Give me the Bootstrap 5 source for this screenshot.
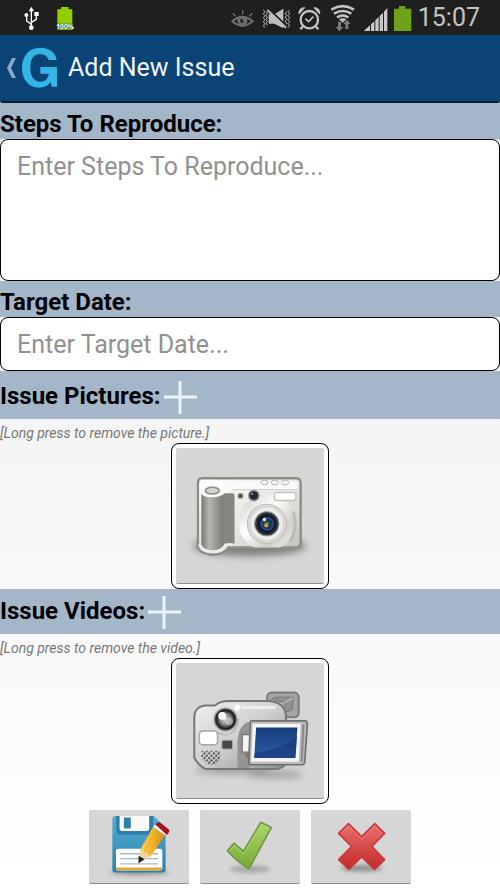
<!DOCTYPE html>
<html lang="en">
<head>
<meta charset="utf-8">
<meta name="viewport" content="width=device-width, initial-scale=1">
<title>Add New Issue</title>
<link href="https://cdn.jsdelivr.net/npm/bootstrap@5.3.0/dist/css/bootstrap.min.css" rel="stylesheet">
<style>
body{font-family:Roboto,sans-serif;background:linear-gradient(#ebebeb,#fff) #fff;min-height:100vh;color:#000}
svg{display:block;flex:none}
.status-bar{height:35px;background:#1f1f1f;color:#c4c4c4;padding:0 20px 0 22px}
.system-left{gap:12px}
.clock{font-size:25px;line-height:34px;margin-left:6px}
.app-bar{height:66px;background:#0a4477}
.app-title{font-size:25px;line-height:34px;color:#f2f2f2;font-weight:400;margin-left:9px}
.back-link{padding-left:5px;gap:5px}
.edge{height:2px;background:#101c33;border-radius:0 0 4px 4px}
.band{background:#a3b7c9}
.band-label{font-size:24px;line-height:36px;font-weight:700}
label.band-label{padding-top:3px;height:36px}
.band-tall{height:48px;padding-top:2px}
.band-video{height:45px;padding-bottom:2px}
.field{border:1px solid #000;border-radius:8px;font-size:25px;line-height:34px;padding:10px 16px;background:#fff;resize:none;color:#000}
.field::placeholder{color:#919191;opacity:1}
.steps{height:142px}
.date{height:54px}
.hint{font-size:14px;line-height:24px;height:24px;font-style:italic;color:#777;padding-top:2px}
.media{width:158px;height:146px;background:#fff;border:1px solid #000;border-radius:8px;padding:4px}
.face{background:#d6d6d6;border:0;border-bottom:1px solid #8e8e8e;border-radius:2px}
.action{width:100px;height:74px}
.actions{gap:11px;padding-top:6px}
.plus{border:0;background:none;margin-left:2px}
</style>
<script src="https://cdn.jsdelivr.net/npm/bootstrap@5.3.0/dist/js/bootstrap.bundle.min.js"></script>
</head>
<body>
<div class="status-bar d-flex align-items-center justify-content-between">
 <div class="system-left d-flex">
  <svg width="19" height="34" viewBox="66 0 57 102" fill="none" stroke="#fff" stroke-width="4"><path d="M94 27V80M94 70L80 60V43M94 64L109 55V42"/><g fill="#fff" stroke="none"><path d="M94 17L102 31H86Z"/><circle cx="94" cy="80" r="7"/><circle cx="79" cy="42" r="6"/><path d="M103 33h13v12h-13z"/></g></svg>
  <svg width="24" height="34" viewBox="158 0 72 102"><path d="M182 18h23v7h11v62h-45V25h11z" fill="#8fce00"/><text x="194" y="83" text-anchor="middle" font-family="Open Sans,sans-serif" font-weight="700" font-size="20" fill="#fff" stroke="#3a4f10" stroke-width="3" paint-order="stroke">100%</text></svg>
 </div>
 <div class="d-flex align-items-center">
  <svg width="30" height="34" viewBox="32 0 90 102" fill="none" stroke="#6f6f6f" stroke-width="4"><path d="M36 61Q66 34 97 61Q66 88 36 61Z" stroke-width="6"/><circle cx="66" cy="59" r="13" fill="#6f6f6f"/><circle cx="65" cy="59" r="6" fill="#1f1f1f" stroke="none"/><path d="M66 59l6-7M67 28v12M37 37l9 9M96 37l-9 9"/></svg>
  <svg width="36" height="34" viewBox="122 0 108 102" fill="none" stroke="#bebebe" stroke-width="3"><path d="M129 27l5 5-5 6 5 6-5 6 5 6-5 6 5 6-5 6 5 6M137 32l4 5-4 6 4 6-4 6 4 6-4 6 4 6M208 27l-5 5 5 6-5 6 5 6-5 6 5 6-5 6 5 6-5 6M199 32l-4 5 4 6-4 6 4 6-4 6 4 6-4 6"/><path d="M145 40h17L189 23V82L162 68H145Z" fill="#bebebe" stroke="none"/><path d="M145 24L201 77" stroke="#1f1f1f" stroke-width="6"/><path d="M141 27L197 80" stroke-width="6"/></svg>
  <svg width="33" height="34" viewBox="230 0 99 102" fill="none" stroke="#c4c4c4" stroke-width="7"><circle cx="267" cy="56" r="26"/><path d="M255 53l10 9 14-15" stroke-width="5"/><path d="M248 76l-8 9M286 76l8 9" stroke-width="7"/><path d="M236 39Q234 20 253 20ZM281 20Q300 20 298 39Z" fill="#c4c4c4" stroke="#c4c4c4" stroke-width="3"/></svg>
  <svg width="34" height="34" viewBox="329 0 102 102" fill="none" stroke="#c4c4c4" stroke-width="8"><path d="M333 26Q367 5 401 26M341 38Q367 22 393 38M350 49Q367 38 384 49"/><path d="M356 55Q367 48 378 55L367 65Z" fill="#c4c4c4" stroke="none"/><path d="M353 62h9v16h7L357 91 346 78h7zM375 84h9V69h7L380 56 369 69h6z" fill="#7b7b7b" stroke="none"/></svg>
  <svg width="28" height="34" viewBox="431 0 84 102" fill="#c9c9c9"><path d="M431 90V89L449 73V90ZM452 90V70L462 61V90ZM465 90V58L475 48V90ZM478 90V45L488 35V90ZM491 90V32L501 21V90Z"/></svg>
  <svg width="20" height="34" viewBox="515 0 60 102"><path d="M536 15h19v8h18v67h-52V23h15z" fill="#70a11a"/></svg>
  <time class="clock">15:07</time>
 </div>
</div>
<header class="app-bar d-flex align-items-center">
 <a href="#" class="back-link d-flex align-items-center text-decoration-none" aria-label="Back">
  <svg width="12" height="24" viewBox="0 0 12 24"><path d="M7 2h4L6 12l5 10H7L2 12Z" fill="#8aa8c3"/></svg>
  <svg width="37" height="42" viewBox="66 142 111 126"><path d="M170 181H146Q140 163 120 163C100 163 91 180 91 204C91 230 102 246 121 246Q142 246 147 222H121V202H171V261H155L152 248Q139 264 117 264C86 264 66 239 66 205C66 169 87 144 120 144Q164 145 170 181Z" fill="#33b5e5"/></svg>
 </a>
 <h1 class="app-title mb-0">Add New Issue</h1>
</header>
<main>
 <form>
  <div class="edge"></div>
  <label for="steps" class="band band-label d-block">Steps To Reproduce:</label>
  <textarea id="steps" class="field steps d-block w-100" placeholder="Enter Steps To Reproduce..."></textarea>
  <label for="date" class="band band-label d-block">Target Date:</label>
  <input id="date" type="text" class="field date d-block w-100" placeholder="Enter Target Date...">
  <section>
   <div class="band band-tall d-flex align-items-center">
    <h2 class="band-label mb-0">Issue Pictures:</h2>
    <button type="button" class="plus p-0" aria-label="Add picture"><svg width="36" height="36" viewBox="0 0 36 36"><path d="M1 19h33M17 3v33" stroke="#eef2f6" stroke-width="3"/></svg></button>
   </div>
   <p class="hint mb-0">[Long press to remove the picture.]</p>
   <div class="media mx-auto">
    <button type="button" class="face w-100 h-100 p-0 d-block" aria-label="Issue picture">
    <svg class="w-100 h-100" viewBox="48 39 443 406">
     <defs>
      <linearGradient id="cb" x1="0" y1="0" x2="1" y2="1"><stop offset="0" stop-color="#fff"/><stop offset=".55" stop-color="#e4e4e0"/><stop offset="1" stop-color="#bfc0bb"/></linearGradient>
      <linearGradient id="grip"><stop offset="0" stop-color="#777972"/><stop offset=".35" stop-color="#b5b6b1"/><stop offset="1" stop-color="#787a74"/></linearGradient>
      <linearGradient id="ring" x1="0" y1="0" x2="1" y2="1"><stop offset="0" stop-color="#c9cac4"/><stop offset=".4" stop-color="#fff"/><stop offset=".7" stop-color="#d0d1c9"/><stop offset="1" stop-color="#f4f4f2"/></linearGradient>
      <radialGradient id="lens"><stop offset="0" stop-color="#b08c25"/><stop offset=".22" stop-color="#243b66"/><stop offset=".5" stop-color="#1b3054"/><stop offset=".7" stop-color="#10161b"/><stop offset="1" stop-color="#48565b"/></radialGradient>
      <filter id="soft" x="-20%" y="-60%" width="140%" height="220%"><feGaussianBlur stdDeviation="11"/></filter>
      <clipPath id="bodyClip"><path d="M125 130H408Q422 130 422 145V325Q422 337 408 338H205Q190 360 157 360Q120 358 113 338V145Q113 130 125 130Z"/></clipPath>
     </defs>
     <ellipse cx="268" cy="334" rx="170" ry="31" fill="#555" opacity=".65" filter="url(#soft)"/>
     <path d="M125 130H408Q422 130 422 145V325Q422 337 408 338H205Q190 360 157 360Q120 358 113 338V145Q113 130 125 130Z" fill="url(#cb)" stroke="#8c8d86" stroke-width="7"/>
     <path d="M122 140H412V163H215Q200 174 195 177H122Z" fill="#fafafa"/>
     <path d="M215 164H415" stroke="#d1d2cd" stroke-width="3"/>
     <g clip-path="url(#bodyClip)"><circle cx="320" cy="263" r="85" fill="url(#ring)"/><path d="M400 230Q414 273 391 319" stroke="#aaa" stroke-width="9" fill="none" opacity=".55"/></g>
     <path d="M190 175H216Q223 175 223 184V327H190Z" fill="#85877f"/>
     <path d="M123 178Q158 193 191 178V331Q180 348 157 348Q132 347 123 330Z" fill="url(#grip)"/>
     <path d="M116 329Q128 351 157 351Q184 350 199 329H218" fill="none" stroke="#ededeb" stroke-width="7"/>
     <path d="M118 168Q122 187 157 187Q191 187 197 167L190 148H124Z" fill="#fafafa"/>
     <ellipse cx="156" cy="167" rx="21" ry="10" fill="#d3d4ce" stroke="#8d8e88" stroke-width="5"/>
     <g fill="#f4f4f2" stroke="#b5b5b0" stroke-width="3"><ellipse cx="313" cy="143" rx="11" ry="7"/><ellipse cx="344" cy="143" rx="11" ry="7"/><ellipse cx="375" cy="143" rx="11" ry="7"/></g>
     <rect x="342" y="173" width="66" height="24" rx="9" fill="#fff" stroke="#c2c2bc" stroke-width="4"/>
     <circle cx="241" cy="183" r="9" fill="#8b8c86"/><circle cx="241" cy="183" r="5" fill="#454743"/>
     <circle cx="281" cy="182" r="17" fill="#777"/><circle cx="281" cy="182" r="12" fill="#20292c"/><circle cx="276" cy="177" r="3" fill="#aaa"/>
     <circle cx="320" cy="267" r="59" fill="#d9d9d5" stroke="#a9aaa4" stroke-width="2"/><circle cx="320" cy="267" r="48" fill="#eee"/>
     <circle cx="320" cy="267" r="37" fill="url(#lens)" stroke="#a0a29f" stroke-width="3"/>
     <circle cx="322" cy="267" r="18" fill="none" stroke="#2a4f94" stroke-width="4"/><circle cx="318" cy="272" r="6" fill="#c5a52f"/><circle cx="313" cy="254" r="5" fill="#e7eef5"/>
    </svg></button>
   </div>
  </section>
  <section>
   <div class="band band-video d-flex align-items-center">
    <h2 class="band-label mb-0">Issue Videos:</h2>
    <button type="button" class="plus p-0" aria-label="Add video"><svg width="36" height="36" viewBox="0 0 36 36"><path d="M1 19h33M17 3v33" stroke="#eef2f6" stroke-width="3"/></svg></button>
   </div>
   <p class="hint mb-0">[Long press to remove the video.]</p>
   <div class="media mx-auto">
    <button type="button" class="face w-100 h-100 p-0 d-block" aria-label="Issue video">
    <svg class="w-100 h-100" viewBox="48 39 443 406">
     <defs>
      <linearGradient id="vb" x1="0" y1="0" x2="1" y2="1"><stop offset="0" stop-color="#f2f2f2"/><stop offset=".5" stop-color="#cfcfcf"/><stop offset="1" stop-color="#8e8e8e"/></linearGradient>
      <linearGradient id="scr" x1="0" y1="0" x2="0" y2="1"><stop offset="0" stop-color="#163d7c"/><stop offset="1" stop-color="#2b5da6"/></linearGradient>
      <radialGradient id="vl"><stop offset="0" stop-color="#ddd"/><stop offset=".45" stop-color="#8b8b8b"/><stop offset=".8" stop-color="#1b1b1b"/><stop offset="1" stop-color="#777"/></radialGradient>
      <pattern id="grid" width="10" height="10" patternUnits="userSpaceOnUse" patternTransform="rotate(-45)"><path d="M1 1h6v5H1z" fill="#343434"/></pattern>
     </defs>
     <ellipse cx="220" cy="360" rx="115" ry="13" fill="#666" opacity=".5" filter="url(#soft)"/><ellipse cx="345" cy="374" rx="85" ry="12" fill="#666" opacity=".45" filter="url(#soft)"/>
     <rect x="321" y="128" width="95" height="74" rx="13" fill="#a4a4a4" stroke="#7b7b7b" stroke-width="6"/><path d="M331 150L343 142H400L397 179L375 188V156Z" fill="#919191" stroke="#777" stroke-width="3"/><path d="M332 151L366 162L400 143" fill="none" stroke="#bababa" stroke-width="4"/>
     <path d="M134 167H164Q178 153 206 153H320Q360 153 373 178Q380 195 378 225V341Q365 358 347 358H137Q117 350 102 325V200Q104 171 134 167Z" fill="url(#vb)" stroke="#777" stroke-width="6"/>
     <path d="M247 173H343" fill="none" stroke="#ededed" stroke-width="9" stroke-linecap="round"/><circle cx="231" cy="173" r="9" fill="#fff"/>
     <path d="M232 355V280Q232 227 268 215V355Z" fill="#949494"/><path d="M169 247Q222 275 236 207" fill="none" stroke="#b3b3b3" stroke-width="4"/>
     <circle cx="196" cy="209" r="35" fill="url(#vl)" stroke="#b0b0b0" stroke-width="4"/><circle cx="186" cy="198" r="12" fill="#fff"/><circle cx="207" cy="215" r="11" fill="#c8c8c8" opacity=".6"/>
     <rect x="117" y="243" width="55" height="42" rx="11" fill="#fff" stroke="#aaa" stroke-width="5"/>
     <rect x="185" y="271" width="32" height="27" rx="4" fill="#484848" stroke="#aaa" stroke-width="3"/>
     <path d="M124 303H180V331L167 344H143L122 326Z" fill="url(#grid)"/>
     <path d="M246 254H269V307H246Z" fill="#f3f3f3" stroke="#777" stroke-width="4"/><path d="M252 312L272 342V310Z" fill="#777"/>
     <path d="M276 213H435Q442 213 442 222L434 338Q433 345 426 345H272Q266 345 266 337L270 219Q270 213 276 213Z" fill="#bbb" stroke="#707070" stroke-width="5"/>
     <path d="M278 222H422L416 336H273Z" fill="#f4f4f4"/><path d="M288 233H412L406 325H282Z" fill="url(#scr)"/><path d="M284 309Q370 299 411 257L406 325H282Z" fill="#173c7c" opacity=".7"/>
     <path d="M430 223L425 336" stroke="#888" stroke-width="6"/>
    </svg></button>
   </div>
  </section>
  <div class="actions d-flex justify-content-center">
   <button type="button" class="face action p-0" aria-label="Save draft"><svg class="w-100 h-100" viewBox="27 30 300 222">
    <defs><linearGradient id="disk" x2="0" y2="1"><stop stop-color="#55aed2"/><stop offset="1" stop-color="#2681ae"/></linearGradient><linearGradient id="pencil"><stop stop-color="#f8cf57"/><stop offset=".5" stop-color="#f4b52b"/><stop offset="1" stop-color="#d48c13"/></linearGradient><filter id="haze" x="-30%" y="-100%" width="160%" height="300%"><feGaussianBlur stdDeviation="6"/></filter></defs>
    <ellipse cx="178" cy="220" rx="90" ry="7" fill="#555" opacity=".6" filter="url(#haze)"/>
    <path d="M106 48H222L258 83V211Q258 220 249 220H105Q96 220 96 211V58Q96 48 106 48Z" fill="url(#disk)"/>
    <path d="M108 48H220V94Q219 105 210 105H119Q109 105 108 94Z" fill="#2e7ea9"/><path d="M118 48H208V87Q207 94 200 94H126Q119 94 118 87Z" fill="#fafafa"/><path d="M131 53h21v33h-21z" fill="#2b7fa9"/>
    <rect x="107" y="148" width="141" height="66" rx="6" fill="#fff"/><path d="M107 205H248V210Q247 214 242 214H113Q107 214 107 208Z" fill="#e5a53c"/><path d="M120 163H235M120 178H235M120 194H235" stroke="#a9b9ca" stroke-width="4"/>
    <path d="M220 81L256 107L211 173L180 151Z" fill="url(#pencil)"/><path d="M231 90L192 158M245 100L203 166" stroke="#dba02a" stroke-width="2"/><path d="M182 148L211 170L176 192Z" fill="#f1d2a2"/><path d="M176 169L194 180L175 192Z" fill="#222"/>
    <path d="M220 81L226 73L262 98L256 107Z" fill="#eee"/><path d="M226 73L234 68Q238 65 244 70L268 89Q272 93 267 99L262 106Z" fill="#a5131a"/>
   </svg></button>
   <button type="submit" class="face action p-0" aria-label="Submit issue"><svg class="w-100 h-100" viewBox="360 30 300 222">
    <defs><linearGradient id="ok" x2="0" y2="1"><stop stop-color="#b1d66b"/><stop offset="1" stop-color="#76a934"/></linearGradient></defs>
    <ellipse cx="510" cy="210" rx="61" ry="10" fill="#555" opacity=".4" filter="url(#haze)"/>
    <path d="M441 154L461 131L490 155L543 67L575 83L507 209Q475 192 441 154Z" fill="url(#ok)" stroke="#6b9d43" stroke-width="5" stroke-linejoin="round"/><path d="M448 153L462 139L491 163L545 74L568 85" fill="none" stroke="#b5d880" stroke-width="2"/>
   </svg></button>
   <button type="reset" class="face action p-0" aria-label="Cancel"><svg class="w-100 h-100" viewBox="693 30 300 222">
    <defs><linearGradient id="no" x2="0" y2="1"><stop stop-color="#e8716d"/><stop offset="1" stop-color="#c5282a"/></linearGradient></defs>
    <ellipse cx="845" cy="207" rx="64" ry="10" fill="#444" opacity=".5" filter="url(#haze)"/>
    <path d="M805 71L845 111L885 71L915 101L876 141L915 181L884 211L845 173L806 211L775 181L814 141L775 101Z" fill="url(#no)" stroke="#c8383b" stroke-width="5" stroke-linejoin="round"/><path d="M783 101L805 79L845 119L885 79L907 101" fill="none" stroke="#ee8480" stroke-width="2"/>
   </svg></button>
  </div>
 </form>
</main>
</body>
</html>
